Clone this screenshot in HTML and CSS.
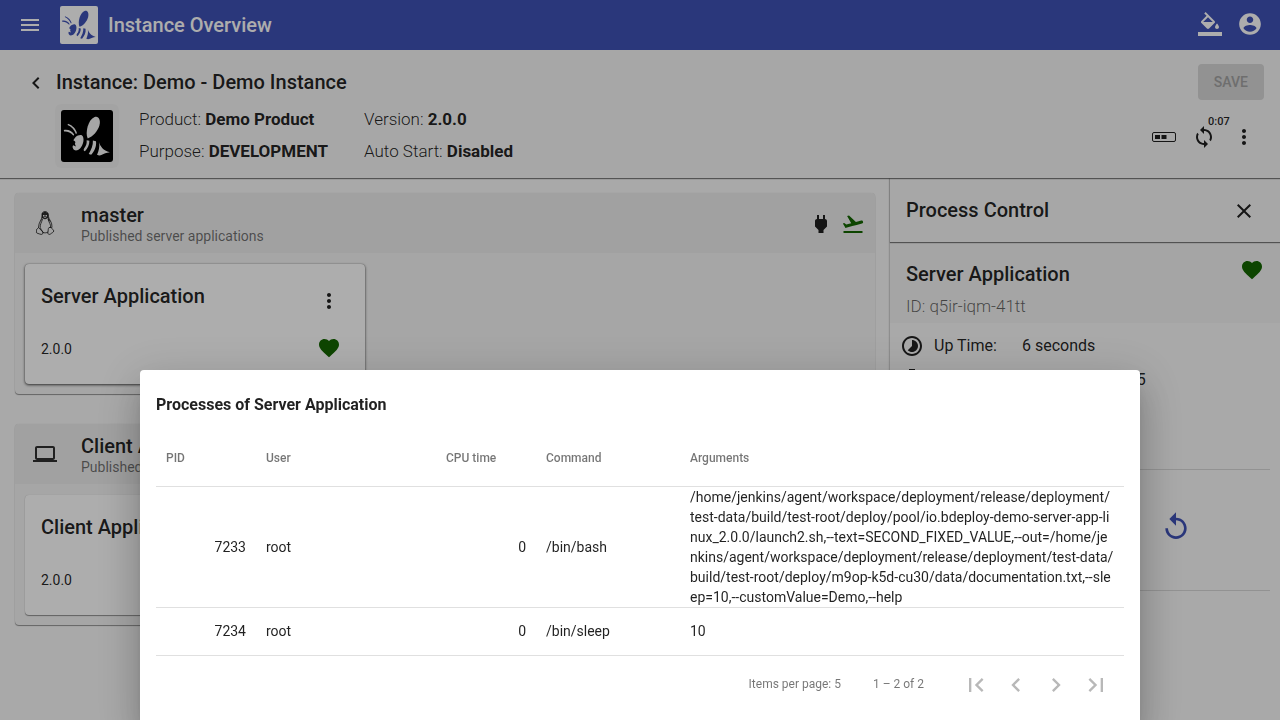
FILE: index.html
```html
<!DOCTYPE html>
<html lang="en">
<head>
<meta charset="utf-8">
<title>Instance Overview</title>
<link rel="stylesheet" href="styles.css">
</head>
<body>
<svg class="defs" aria-hidden="true">
  <symbol id="bee" viewBox="0 0 150 150">
    <path d="M77 82C69 66 78 27 97 20C108 16 115 27 111 44C106 61 92 77 77 82Z"/>
    <path d="M60 73C69 80 65 101 55 111C48 118 39 119 35 112C33 108 33 105 35 102L43 105L40 97C43 93 41 90 36 88C38 80 50 69 60 73Z"/>
    <path d="M20 40C34 45 43 55 46 67L43 69C38 57 31 48 19 43ZM8 58C20 55 32 61 38 71L36 74C28 65 18 61 9 62Z"/>
    <path d="M74 87L82 89C82 101 77 111 69 119C64 117 65 114 67 110C72 104 75 97 74 87ZM92 88L101 90C103 106 96 119 87 129L80 127C87 115 93 102 92 88ZM110 93C114 106 121 116 141 122C130 123 124 127 118 129C112 132 108 131 104 129C109 118 112 106 110 93Z"/>
  </symbol>
  <symbol id="more" viewBox="0 0 24 24"><path d="M12 8c1.1 0 2-.9 2-2s-.9-2-2-2-2 .9-2 2 .9 2 2 2zm0 2c-1.1 0-2 .9-2 2s.9 2 2 2 2-.9 2-2-.9-2-2-2zm0 6c-1.1 0-2 .9-2 2s.9 2 2 2 2-.9 2-2-.9-2-2-2z"/></symbol>
  <symbol id="heart" viewBox="0 0 24 24"><path d="M12 21.35l-1.45-1.32C5.4 15.36 2 12.28 2 8.5 2 5.42 4.42 3 7.5 3c1.74 0 3.41.81 4.5 2.09C13.09 3.81 14.76 3 16.5 3 19.58 3 22 5.42 22 8.5c0 3.78-3.4 6.86-8.55 11.54L12 21.35z"/></symbol>
</svg>

<header class="topbar">
  <button class="icon-button" aria-label="Menu"><svg class="icon" viewBox="0 0 24 24"><path d="M3 18h18v-2H3v2zm0-5h18v-2H3v2zm0-7v2h18V6H3z"/></svg></button>
  <span class="brand"><svg viewBox="0 0 150 150"><use href="#bee"/></svg></span>
  <h1 class="title">Instance Overview</h1>
  <div class="topbar-actions">
    <button class="icon-button" aria-label="Theme"><svg class="icon" viewBox="0 0 24 24"><path d="M16.56 8.94L7.62 0 6.21 1.41l2.38 2.38-5.15 5.15c-.59.59-.59 1.54 0 2.12l5.5 5.5c.29.29.68.44 1.06.44s.77-.15 1.06-.44l5.5-5.5c.59-.58.59-1.53 0-2.12zM5.21 10L10 5.21 14.79 10H5.21zM19 11.5s-2 2.17-2 3.5c0 1.1.9 2 2 2s2-.9 2-2c0-1.33-2-3.5-2-3.5zM0 20h24v4H0v-4z"/></svg></button>
    <button class="icon-button" aria-label="Account"><svg class="icon account" viewBox="0 0 24 24"><path d="M12 2C6.48 2 2 6.48 2 12s4.48 10 10 10 10-4.48 10-10S17.52 2 12 2zm0 3c1.66 0 3 1.34 3 3s-1.34 3-3 3-3-1.34-3-3 1.34-3 3-3zm0 14.2c-2.5 0-4.71-1.28-6-3.22.03-1.99 4-3.08 6-3.08 1.99 0 5.97 1.09 6 3.08-1.29 1.94-3.5 3.22-6 3.22z"/></svg></button>
  </div>
</header>

<section class="instance">
  <div class="instance-row">
    <button class="icon-button" aria-label="Back"><svg class="icon" viewBox="0 0 24 24"><path d="M15.41 7.41L14 6l-6 6 6 6 1.41-1.41L10.83 12z"/></svg></button>
    <h2 class="title">Instance: Demo - Demo Instance</h2>
    <button class="save" disabled>SAVE</button>
  </div>
  <div class="instance-info">
    <span class="product-logo"><svg viewBox="0 0 150 150"><use href="#bee"/></svg></span>
    <div class="facts">
      <span>Product: <b>Demo Product</b></span>
      <span>Version: <b>2.0.0</b></span>
      <span>Purpose: <b>DEVELOPMENT</b></span>
      <span>Auto Start: <b>Disabled</b></span>
    </div>
    <div class="instance-actions">
      <button class="icon-button" aria-label="Nodes"><svg class="icon" viewBox="0 0 24 24"><rect x="0.5" y="7.5" width="23" height="9" rx="1.5" fill="none" stroke="currentColor"/><path d="M3 10h5v4H3zM9.500 10h5v4h-5z"/></svg></button>
      <button class="icon-button sync" aria-label="Synchronize"><svg class="icon" viewBox="0 0 24 24"><path d="M12 4V1L8 5l4 4V6c3.31 0 6 2.690 6 6 0 1.010-.25 1.970-.7 2.800l1.460 1.460C19.540 15.030 20 13.570 20 12c0-4.420-3.580-8-8-8zm0 14c-3.310 0-6-2.690-6-6 0-1.010.25-1.970.7-2.800L5.240 7.740C4.460 8.970 4 10.430 4 12c0 4.420 3.580 8 8 8v3l4-4-4-4v3z"/></svg><span class="countdown">0:07</span></button>
      <button class="icon-button" aria-label="More"><svg class="icon"><use href="#more"/></svg></button>
    </div>
  </div>
</section>

<div class="content">
  <main class="nodes">
    <section class="node">
      <header class="node-head">
        <svg class="icon node-icon" viewBox="0 0 24 24" fill="none" stroke="currentColor" stroke-width="0.9">
          <path d="M9 5C8.600 2 9.700.6 12 .6S15.600 2 15.400 5.500C15.500 8 19.500 11 19 16.500M9 5C9.300 8.500 5.500 11 5.500 16.500M9.500 8C8.500 12 7 13 7.200 16.500C8.500 19.500 9.300 19.500 10 21.500C11.500 22 13.500 22 15 21M15 8C16 12 18 13 17.500 16.500"/>
          <path d="M5.500 16.500C5 18 3.200 17.800 3.500 19.200C3.800 20.500 3 21.500 3.800 22C5.500 22.500 7 23.400 8.200 23.400C9.500 23.400 10.300 22.500 9.800 21ZM18.500 16.500C19 18.500 20.500 18.500 20.800 20C20.500 21.500 18.500 22 17.500 23C16 24 14.500 23 14.900 21.500C15.300 19.500 15 17.500 16 16.500Z"/>
          <path fill="currentColor" stroke="none" d="M9 2.500Q12-1 15.200 2.500L15.500 7L17.500 11L16 10L14.500 7Q12 9.500 9.500 7L7.500 11L9 7Z"/><path fill="#eee" stroke="none" d="M10 4h1.500v1.500H10zM12.500 4H14v1.500h-1.500zM10.500 6h3l-1.500 1z"/>
        </svg>
        <div><h3 class="title">master</h3><p class="subtitle">Published server applications</p></div>
        <div class="node-state">
          <svg class="icon" viewBox="0 0 24 24"><path d="M16.010 7L16 3h-2v4h-4V3H8v4h-.010C7 6.990 6 7.990 6 8.990v5.490L9.500 18v3h5v-3l3.500-3.510v-5.500c0-1-1-2-1.990-1.990z"/></svg>
          <svg class="icon green" viewBox="0 0 24 24"><path d="M2.500 19h19v2h-19zm19.570-9.360c-.21-.8-1.040-1.280-1.840-1.060L14.920 10l-6.900-6.430-1.930.51 4.140 7.170-4.970 1.330-1.970-1.540-1.450.39 1.820 3.160.77 1.330 1.600-.43 5.310-1.420 4.350-1.160L21 11.490c.81-.23 1.280-1.050 1.070-1.850z"/></svg>
        </div>
      </header>
      <div class="node-body">
        <article class="card selected">
          <div class="card-row"><h4 class="title">Server Application</h4><button class="icon-button" aria-label="More"><svg class="icon"><use href="#more"/></svg></button></div>
          <div class="card-row"><span>2.0.0</span><span class="card-state"><svg class="icon green"><use href="#heart"/></svg></span></div>
        </article>
      </div>
    </section>
    <section class="node">
      <header class="node-head">
        <svg class="icon node-icon" viewBox="0 0 24 24"><path d="M20 18c1.100 0 1.990-.9 1.990-2L22 6c0-1.100-.9-2-2-2H4c-1.100 0-2 .9-2 2v10c0 1.100.9 2 2 2H0v2h24v-2h-4zM4 6h16v10H4V6z"/></svg>
        <div><h3 class="title">Client Applications</h3><p class="subtitle">Published client applications</p></div>
      </header>
      <div class="node-body">
        <article class="card">
          <div class="card-row"><h4 class="title">Client Application</h4></div>
          <div class="card-row"><span>2.0.0</span></div>
        </article>
      </div>
    </section>
  </main>

  <aside class="control">
    <header class="control-head"><h2 class="title">Process Control</h2><button class="icon-button" aria-label="Close"><svg class="icon" viewBox="0 0 24 24"><path d="M19 6.410L17.590 5 12 10.590 6.410 5 5 6.410 10.590 12 5 17.590 6.410 19 12 13.410 17.590 19 19 17.590 13.410 12z"/></svg></button></header>
    <div class="process"><div><h3 class="title">Server Application</h3><p class="process-id">ID: q5ir-iqm-41tt</p></div><svg class="icon green"><use href="#heart"/></svg></div>
    <div class="stats">
      <svg class="icon" viewBox="0 0 24 24"><path d="M16.240 7.760C15.070 6.590 13.540 6 12 6v6l-4.240 4.240c2.340 2.340 6.140 2.340 8.490 0 2.340-2.340 2.340-6.140-.010-8.480zM12 2C6.480 2 2 6.480 2 12s4.480 10 10 10 10-4.480 10-10S17.520 2 12 2zm0 18c-4.420 0-8-3.580-8-8s3.580-8 8-8 8 3.580 8 8-3.580 8-8 8z"/></svg>
      <span>Up Time:</span><span>6 seconds</span>
      <svg class="icon" viewBox="0 0 24 24"><path d="M15 1H9v2h6V1zm-4 13h2V8h-2v6z"/><circle cx="12" cy="13" r="8" fill="none" stroke="currentColor" stroke-width="2"/></svg>
      <span>Started:</span><span>8/12/20 10:15:35</span>
    </div>
    <div class="restart"><button class="icon-button" aria-label="Restart"><svg class="icon large" viewBox="0 0 24 24"><path d="M12 5V1L7 6l5 5V7c3.310 0 6 2.690 6 6s-2.690 6-6 6-6-2.690-6-6H4c0 4.420 3.580 8 8 8s8-3.580 8-8-3.580-8-8-8z"/></svg></button></div>
  </aside>
</div>

<div class="backdrop">
  <section class="dialog" role="dialog" aria-labelledby="dialog-title">
    <h2 class="dialog-title" id="dialog-title">Processes of Server Application</h2>
    <table class="processes">
      <colgroup><col class="col-pid"><col class="col-user"><col class="col-cpu"><col class="col-command"><col></colgroup>
      <thead><tr><th>PID</th><th>User</th><th>CPU time</th><th>Command</th><th>Arguments</th></tr></thead>
      <tbody>
        <tr><td class="number">7233</td><td>root</td><td class="number">0</td><td>/bin/bash</td><td class="arguments">/home/jenkins/agent/workspace/deployment/release/deployment/test-data/build/test-root/deploy/pool/io.bdeploy-demo-server-app-linux_2.0.0/launch2.sh,--text=SECOND_FIXED_VALUE,--out=/home/jenkins/agent/workspace/deployment/release/deployment/test-data/build/test-root/deploy/m9op-k5d-cu30/data/documentation.txt,--sleep=10,--customValue=Demo,--help</td></tr>
        <tr><td class="number">7234</td><td>root</td><td class="number">0</td><td>/bin/sleep</td><td class="arguments">10</td></tr>
      </tbody>
    </table>
    <footer class="paginator">
      <span class="page-size">Items per page: <span>5</span></span>
      <span class="range">1 – 2 of 2</span>
      <div class="pages">
        <button class="icon-button" aria-label="First page" disabled><svg class="icon pager" viewBox="0 0 24 24"><path d="M18.410 16.590L13.820 12l4.590-4.590L17 6l-6 6 6 6zM6 6h2v12H6z"/></svg></button>
        <button class="icon-button" aria-label="Previous page" disabled><svg class="icon pager" viewBox="0 0 24 24"><path d="M15.410 7.410L14 6l-6 6 6 6 1.410-1.410L10.830 12z"/></svg></button>
        <button class="icon-button" aria-label="Next page" disabled><svg class="icon pager" viewBox="0 0 24 24"><path d="M10 6L8.590 7.410 13.170 12l-4.580 4.590L10 18l6-6z"/></svg></button>
        <button class="icon-button" aria-label="Last page" disabled><svg class="icon pager" viewBox="0 0 24 24"><path d="M5.590 7.410L10.180 12l-4.590 4.590L7 18l6-6-6-6zM16 6h2v12h-2z"/></svg></button>
      </div>
    </footer>
  </section>
</div>
</body>
</html>
```
FILE: styles.css
```css
* { box-sizing: border-box; }

body {
  margin: 0;
  height: 100vh;
  overflow: hidden;
  display: flex;
  flex-direction: column;
  background: #fafafa;
  color: rgba(0, 0, 0, 0.87);
  font: 400 14px/20px Roboto, "Liberation Sans", sans-serif;
}

h1, h2, h3, h4, p { margin: 0; }

.defs { position: absolute; width: 0; height: 0; }

.title { font-size: 20px; line-height: 24px; font-weight: 500; }

.icon { display: block; width: 24px; height: 24px; flex: none; fill: currentColor; }
.icon.account { width: 26px; height: 26px; }
.icon.pager { width: 28px; height: 28px; }
.icon.large { width: 32px; height: 32px; }
.icon.node-icon { margin: 0 24px 2px 18px; }
.icon.node-icon[fill="none"] { fill: none; }
.green { color: #146600; }

.icon-button {
  width: 40px;
  height: 40px;
  padding: 0;
  border: 0;
  background: none;
  color: inherit;
  display: grid;
  place-items: center;
  flex: none;
}

.topbar {
  height: 50px;
  flex: none;
  display: flex;
  align-items: center;
  padding: 0 10px;
  background: #3f51b5;
  color: #fff;
}
.brand {
  width: 38px;
  height: 38px;
  margin: 0 10px;
  border-radius: 2px;
  background: #fff;
  fill: #3f51b5;
}
.brand svg, .product-logo svg { display: block; width: 100%; height: 100%; }
.topbar-actions { display: flex; margin-left: auto; padding-bottom: 2px; }

.instance {
  flex: none;
  padding: 14px 16px 10px;
  background: #f7f7f7;
  box-shadow: 0 1px 1px rgba(0, 0, 0, 0.5);
  z-index: 1;
}
.instance-row { display: flex; align-items: center; height: 36px; }
.instance-row .icon-button { padding-top: 2px; }
.save {
  margin-left: auto;
  height: 36px;
  padding: 0 16px;
  border: 0;
  border-radius: 4px;
  background: #d7d7d7;
  color: #a3a3a3;
  font: 500 14px/36px Roboto, sans-serif;
}
.instance-info { display: flex; align-items: center; padding: 4px 0 0 39px; }
.product-logo {
  width: 64px;
  height: 64px;
  padding: 6px;
  border-radius: 6px;
  background: #f1f1f1;
}
.product-logo svg { background: #000; border-radius: 3px; fill: #f5f5f5; }
.facts {
  align-self: flex-start;
  height: 64px;
  margin-left: 20px;
  display: grid;
  grid-template-columns: 225px 225px;
  align-content: center;
  padding-bottom: 2px;
  font-size: 17px;
  line-height: 32px;
  font-weight: 300;
}
.facts b { font-weight: 700; }
.instance-actions { display: flex; margin-left: auto; padding-top: 2px; }
.sync { position: relative; }
.countdown {
  position: absolute;
  left: 24px;
  top: -3px;
  font: 500 11px/16px Roboto, sans-serif;
}

.content { flex: 1; min-height: 0; display: flex; }

.nodes {
  flex: 1;
  padding: 15px;
  display: flex;
  flex-direction: column;
  gap: 30px;
  overflow: hidden;
}
.node {
  flex: none;
  border-radius: 4px;
  overflow: hidden;
  background: #f5f5f5;
  box-shadow: 0 1px 1px rgba(0, 0, 0, 0.4), 0 0 1px rgba(0, 0, 0, 0.2);
}
.node-head {
  height: 60px;
  display: flex;
  align-items: center;
  background: #eee;
  padding: 2px 10px 0 0;
}
.node-icon { color: rgba(0, 0, 0, 0.8); }
.node-head .title { line-height: 24px; }
.subtitle { line-height: 18px; color: rgba(0, 0, 0, 0.54); }
.node-state { display: flex; gap: 8px; margin-left: auto; }
.node-body { padding: 11px 10px 10px; }
.card {
  width: 340px;
  height: 120px;
  padding: 16px 16px 15px;
  display: flex;
  flex-direction: column;
  justify-content: space-between;
  border-radius: 4px;
  background: #fff;
  box-shadow: 0 1px 1px rgba(0, 0, 0, 0.4), 0 0 1px rgba(0, 0, 0, 0.2);
}
.card.selected { box-shadow: 0 1px 3px rgba(0, 0, 0, 0.7), 0 0 1px rgba(0, 0, 0, 0.4); }
.card-row { display: flex; align-items: center; justify-content: space-between; height: 40px; line-height: 40px; }
.card-row .title { align-self: flex-start; line-height: 32px; }
.card-row .icon-button { padding-top: 2px; }
.card-state { width: 40px; height: 40px; padding-bottom: 2px; display: grid; place-items: center; }

.control {
  width: 390px;
  flex: none;
  background: #f9f9f9;
  box-shadow: 0 0 2px rgba(0, 0, 0, 0.5);
}
.control-head {
  position: relative;
  height: 64px;
  display: flex;
  align-items: center;
  justify-content: space-between;
  padding: 0 16px;
  background: #f7f7f7;
  box-shadow: 0 1px 1px rgba(0, 0, 0, 0.5);
}
.control-head .icon-button { padding-top: 2px; }
.process {
  height: 81px;
  padding: 16px 16px 0;
  display: flex;
  justify-content: space-between;
  background: #f4f4f4;
}
.process .title { line-height: 32px; }
.process-id { font-size: 17px; line-height: 32px; font-weight: 300; color: rgba(0, 0, 0, 0.6); }
.stats {
  display: grid;
  grid-template-columns: 24px 78px 1fr;
  column-gap: 10px;
  align-items: center;
  grid-auto-rows: 34px;
  padding: 6px 10px 72px;
  font-size: 16px;
}
.restart {
  margin: 0 10px;
  height: 122px;
  padding: 0 0 6px 256px;
  display: grid;
  align-items: center;
  color: #3f51b5;
  border-top: 1px solid #d8d8d8;
  border-bottom: 1px solid #d8d8d8;
}

.backdrop {
  position: fixed;
  inset: 0;
  z-index: 2;
  display: flex;
  justify-content: center;
  align-items: flex-start;
  padding: 370px 140px 0;
  overflow: hidden;
  background: rgba(0, 0, 0, 0.32);
}
.dialog {
  flex: 1;
  padding: 16px;
  border-radius: 4px;
  background: #fff;
  box-shadow: 0 11px 15px -7px rgba(0, 0, 0, 0.2), 0 24px 38px 3px rgba(0, 0, 0, 0.14), 0 9px 46px 8px rgba(0, 0, 0, 0.12);
}
.dialog-title { font-size: 16px; line-height: 38px; font-weight: 700; margin-bottom: 6px; }

.processes { width: 100%; table-layout: fixed; border-collapse: collapse; }
.col-pid, .col-cpu { width: 100px; }
.col-user { width: 180px; }
.col-command { width: 144px; }
.processes th, .processes td { padding: 0 10px; text-align: left; border-bottom: 1px solid #e0e0e0; }
.processes th { height: 56px; font-size: 12px; font-weight: 500; color: rgba(0, 0, 0, 0.54); }
.processes td { height: 48px; }
.processes .number { text-align: right; }
.processes .arguments { word-break: break-all; }

.paginator {
  height: 56px;
  display: flex;
  align-items: center;
  justify-content: flex-end;
  padding-right: 8px;
  font-size: 12px;
  color: rgba(0, 0, 0, 0.54);
}
.range { margin: 0 32px; }
.pages { display: flex; padding-top: 2px; color: #b8b8b8; }
```
